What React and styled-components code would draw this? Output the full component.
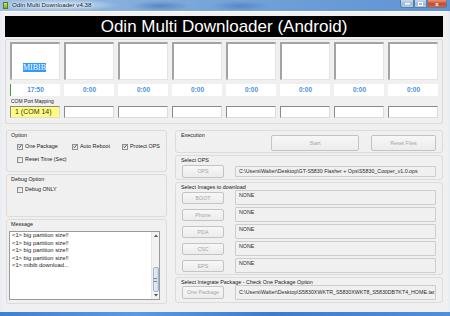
import React from "react";
import styled, { createGlobalStyle } from "styled-components";

const GlobalStyle = createGlobalStyle`
  html, body { margin: 0; padding: 0; background: #3b78c8; }
  body { font-family: "Liberation Sans", Arial, sans-serif; }
  * { box-sizing: border-box; }
`;

const Window = styled.div`
  width: 450px;
  height: 316px;
  display: flex;
  flex-direction: column;
  overflow: hidden;
  background: #dfe6ef;
`;

const TitleBar = styled.div`
  height: 11px;
  display: flex;
  align-items: flex-start;
  background:
    radial-gradient(ellipse 60px 6px at 60px 5px, rgba(225,236,248,0.9), rgba(225,236,248,0) 100%),
    radial-gradient(ellipse 30px 5px at 160px 6px, rgba(60,110,180,0.6), rgba(60,110,180,0) 100%),
    radial-gradient(ellipse 30px 5px at 240px 6px, rgba(60,110,180,0.5), rgba(60,110,180,0) 100%),
    linear-gradient(90deg, #9fc0e6 0%, #7faad9 35%, #6f9fd8 60%, #5f93d3 100%);
`;

const AppIcon = styled.div`
  width: 5px;
  height: 7px;
  margin: 2px 0 0 3px;
  background: linear-gradient(180deg, #d8e45a, #7fae2e);
  border: 1px solid #5a7a20;
`;

const TitleText = styled.span`
  font-size: 6.2px;
  line-height: 10px;
  margin-left: 4px;
  color: #101820;
  text-shadow: 0 0 3px #eef4fb, 0 0 2px #eef4fb;
`;

const Caption = styled.div`
  margin-left: auto;
  margin-right: 3px;
  display: flex;
  height: 8px;
`;

const CapBtn = styled.div`
  width: ${(p) => p.$w}px;
  height: 8px;
  border: 1px solid #5a7ea8;
  border-top: none;
  background: ${(p) =>
    p.$close
      ? "linear-gradient(180deg, #e8967a, #c9472a 55%, #d8663e)"
      : "linear-gradient(180deg, #c6d8ec, #9fbbdc 55%, #b5cbe4)"};
  display: flex;
  align-items: center;
  justify-content: center;
  color: #fff;
  font-size: 6px;
  font-weight: bold;
  border-radius: ${(p) => (p.$close ? "0 0 3px 0" : p.$first ? "0 0 0 3px" : "0")};
`;

const Frame = styled.div`
  flex: 1;
  display: flex;
  flex-direction: column;
  background: #e9eef4;
`;

const Client = styled.div`
  flex: 1;
  background: #f0f0f0;
  border-top: 1px solid #fbfbfb;
  margin: 0 2px;
  padding: 4px 5px 0 3px;
  display: flex;
  flex-direction: column;
`;

const Header = styled.div`
  height: 21px;
  background: #000;
  color: #fff;
  font-size: 17px;
  line-height: 21px;
  text-align: center;
  margin-bottom: 2px;
  white-space: nowrap;
`;

const TopPanel = styled.div`
  height: 85px;
  border: 1px solid #dadada;
  border-radius: 2px;
  padding: 2px 4px 0 4px;
  display: grid;
  grid-template-columns: repeat(8, 50px);
  column-gap: 4px;
  grid-template-rows: 38px 12px 10px 12px;
`;

const PortBox = styled.div`
  background: #fff;
  border-top: 2px solid #a3a3a3;
  border-left: 2px solid #a3a3a3;
  border-right: 1px solid #e3e3e3;
  border-bottom: 1px solid #e3e3e3;
  padding: 12px 0 0 11px;
`;

const Selected = styled.span`
  font-family: "Liberation Serif", "Times New Roman", serif;
  font-size: 8px;
  line-height: 9px;
  display: inline-block;
  background: #3399ff;
  color: #fff;
`;

const TimeRow = styled.div`
  grid-column: 1 / -1;
  grid-row: 2;
  display: grid;
  grid-template-columns: repeat(8, 50px);
  column-gap: 4px;
  padding-top: 4px;
`;

const Time = styled.div`
  height: 12px;
  background: #fff;
  border-left: 1px solid ${(p) => (p.$progress ? "#3ea03e" : "#fff")};
  color: #4a92e4;
  font-weight: bold;
  font-size: 6.5px;
  line-height: 12px;
  text-align: center;
`;

const ComLabel = styled.div`
  grid-column: 1 / -1;
  grid-row: 3;
  font-size: 5px;
  line-height: 6px;
  padding: 6px 0 0 1px;
  color: #222;
  white-space: nowrap;
`;

const ComRow = styled.div`
  grid-column: 1 / -1;
  grid-row: 4;
  display: grid;
  grid-template-columns: repeat(8, 50px);
  column-gap: 4px;
  padding-top: 4px;
`;

const ComBox = styled.div`
  height: 12px;
  background: ${(p) => (p.$active ? "#fcfc7e" : "#fff")};
  border-top: 1px solid #8a8a8a;
  border-left: 1px solid #8a8a8a;
  border-right: 1px solid #dcdcdc;
  border-bottom: 1px solid #dcdcdc;
  font-size: 7px;
  line-height: 10px;
  padding-left: 4px;
  color: #333;
  white-space: nowrap;
`;

const Bottom = styled.div`
  display: grid;
  grid-template-columns: 161px 268px;
  column-gap: 8px;
  margin: 6px 0 0 1px;
`;

const Column = styled.div`
  display: flex;
  flex-direction: column;
  gap: 2px;
`;

const Group = styled.div`
  height: ${(p) => p.$h}px;
  border: 1px solid #dcdcdc;
  border-radius: 3px;
  padding: 1px 6px 0 6px;
  display: flex;
  flex-direction: column;
`;

const GroupLabel = styled.div`
  font-size: 5.4px;
  line-height: 6px;
  color: #1a1a1a;
  margin-left: ${(p) => p.$ml ?? -2}px;
  flex: ${(p) => (p.$grow ? 1 : "none")};
  white-space: nowrap;
`;

const CheckGrid = styled.div`
  display: grid;
  grid-template-columns: 55px 50px auto;
  row-gap: 6px;
  margin-top: ${(p) => p.$mt || 4}px;
  padding-left: 4px;
`;

const CheckItem = styled.label`
  display: flex;
  align-items: center;
  gap: 2px;
  font-size: 5.4px;
  line-height: 7px;
  color: #222;
  white-space: nowrap;
`;

const Box = styled.span`
  width: 6px;
  height: 6px;
  border: 1px solid #8e8f8f;
  background: linear-gradient(135deg, #dcdcdc, #fbfbfb);
  display: inline-flex;
  align-items: center;
  justify-content: center;
`;

const Check = ({ checked, label }) => (
  <CheckItem>
    <Box>
      {checked && (
        <svg width="5" height="5" viewBox="0 0 10 10">
          <path d="M1.5 5.2 L4 8 L8.8 1.5" fill="none" stroke="#24417e" strokeWidth="2" />
        </svg>
      )}
    </Box>
    {label}
  </CheckItem>
);

const MessageArea = styled.div`
  margin: 4px 0 0 -4px;
  width: 151px;
  height: 69px;
  background: #fff;
  border: 1px solid #9a9a9a;
  display: flex;
`;

const MessageText = styled.div`
  flex: 1;
  font-size: 5.8px;
  line-height: 7.6px;
  color: #1a1a1a;
  padding: 0 0 0 2px;
  white-space: pre;
`;

const ScrollBar = styled.div`
  width: 8px;
  background: #f2f2f2;
  border-left: 1px solid #e6e6e6;
  display: flex;
  flex-direction: column;
  align-items: center;
`;

const Arrow = styled.div`
  height: 7px;
  width: 100%;
  display: flex;
  align-items: center;
  justify-content: center;
`;

const Thumb = styled.div`
  margin-top: auto;
  width: 6px;
  height: 25px;
  border: 1px solid #9eb2cb;
  border-radius: 2px;
  background: linear-gradient(90deg, #e9f0f8, #cddbea);
  display: flex;
  align-items: center;
  justify-content: center;
`;

const Grip = styled.div`
  width: 3px;
  height: 4px;
  border-top: 1px solid #6f84a0;
  border-bottom: 1px solid #6f84a0;
  background: linear-gradient(180deg, transparent 40%, #6f84a0 40%, #6f84a0 60%, transparent 60%);
`;

const ExecRow = styled.div`
  display: flex;
  align-items: flex-start;
  height: 100%;
`;

const Btn = styled.div`
  width: ${(p) => p.$w}px;
  height: ${(p) => p.$h || 12}px;
  margin-top: ${(p) => p.$mt || 0}px;
  margin-left: ${(p) => p.$ml || 0}px;
  flex-shrink: 0;
  border: 1px solid #c4c4c4;
  border-radius: 2px;
  background: linear-gradient(180deg, #f7f7f7, #ececec);
  color: #a6a6a6;
  font-size: 5.3px;
  line-height: ${(p) => (p.$h || 12) - 2}px;
  text-align: center;
  white-space: nowrap;
`;

const FileRow = styled.div`
  display: flex;
  align-items: center;
  height: 15px;
  margin-top: ${(p) => p.$mt || 0}px;
`;

const PathBox = styled.div`
  margin-left: 11px;
  width: 202px;
  height: ${(p) => p.$h || 15}px;
  border: 1px solid #cdcdcd;
  border-radius: 1px;
  background: #f0f0f0;
  color: #2a2a2a;
  font-size: 5.3px;
  line-height: ${(p) => p.$lh || 9}px;
  padding-left: 3px;
  white-space: nowrap;
  overflow: hidden;
`;

const Taskbar = styled.div`
  height: 4px;
  margin-top: auto;
  background: linear-gradient(90deg, #3f7fd0, #5a9ae0 30%, #3d7ccc 60%, #4f8fda);
`;

export default function App() {
  const times = ["17:50", "0:00", "0:00", "0:00", "0:00", "0:00", "0:00", "0:00"];
  const images = ["BOOT", "Phone", "PDA", "CSC", "EPS"];
  const log =
    "<1> big partition size!!\n<1> big partition size!!\n<1> big partition size!!\n<1> big partition size!!\n<1> mibib download...";
  return (
    <>
      <GlobalStyle />
      <Window>
        <TitleBar>
          <AppIcon />
          <TitleText>Odin Multi Downloader v4.38</TitleText>
          <Caption>
            <CapBtn $w={14} $first>
              <svg width="5" height="2" viewBox="0 0 5 2"><rect width="5" height="1.5" fill="#fff" /></svg>
            </CapBtn>
            <CapBtn $w={13}>
              <svg width="5" height="4" viewBox="0 0 5 4"><rect x="0.5" y="0.5" width="4" height="3" fill="none" stroke="#fff" /></svg>
            </CapBtn>
            <CapBtn $w={20} $close>x</CapBtn>
          </Caption>
        </TitleBar>
        <Frame>
          <Client>
            <Header>Odin Multi Downloader (Android)</Header>
            <TopPanel>
              {times.map((_, i) => (
                <PortBox key={i}>{i === 0 && <Selected>MIBIB</Selected>}</PortBox>
              ))}
              <TimeRow>
                {times.map((t, i) => (
                  <Time key={i} $progress={i === 0}>{t}</Time>
                ))}
              </TimeRow>
              <ComLabel>COM Port Mapping</ComLabel>
              <ComRow>
                {times.map((_, i) => (
                  <ComBox key={i} $active={i === 0}>{i === 0 ? "1 (COM 14)" : ""}</ComBox>
                ))}
              </ComRow>
            </TopPanel>
            <Bottom>
              <Column>
                <Group $h={42}>
                  <GroupLabel>Option</GroupLabel>
                  <CheckGrid $mt={5}>
                    <Check checked label="One Package" />
                    <Check checked label="Auto Reboot" />
                    <Check checked label="Protect OPS" />
                    <Check label="Reset Time (Sec)" />
                  </CheckGrid>
                </Group>
                <Group $h={43}>
                  <GroupLabel>Debug Option</GroupLabel>
                  <CheckGrid $mt={4}>
                    <Check label="Debug ONLY" />
                  </CheckGrid>
                </Group>
                <Group $h={85}>
                  <GroupLabel>Message</GroupLabel>
                  <MessageArea>
                    <MessageText>{log}</MessageText>
                    <ScrollBar>
                      <Arrow>
                        <svg width="4" height="3" viewBox="0 0 4 3"><path d="M0 3 L2 0.5 L4 3Z" fill="#505050" /></svg>
                      </Arrow>
                      <Thumb><Grip /></Thumb>
                      <Arrow>
                        <svg width="4" height="3" viewBox="0 0 4 3"><path d="M0 0 L2 2.5 L4 0Z" fill="#505050" /></svg>
                      </Arrow>
                    </ScrollBar>
                  </MessageArea>
                </Group>
              </Column>
              <Column>
                <Group $h={23}>
                  <ExecRow>
                    <GroupLabel $grow $ml={-1}>Execution</GroupLabel>
                    <Btn $w={88} $h={16} $mt={3}>Start</Btn>
                    <Btn $w={65} $h={16} $mt={3} $ml={12}>Reset Files</Btn>
                  </ExecRow>
                </Group>
                <Group $h={25}>
                  <GroupLabel $ml={-1}>Select OPS</GroupLabel>
                  <FileRow $mt={1}>
                    <Btn $w={42} $h={13}>OPS</Btn>
                    <PathBox $h={11} $lh={9}>
                      C:\Users\Walter\Desktop\GT-S5830 Flasher + Ops\S5830_Cooper_v1.0.ops
                    </PathBox>
                  </FileRow>
                </Group>
                <Group $h={93}>
                  <GroupLabel $ml={-1}>Select Images to download</GroupLabel>
                  {images.map((n, i) => (
                    <FileRow key={n} $mt={i === 0 ? 0 : 2}>
                      <Btn $w={42} $h={12}>{n}</Btn>
                      <PathBox>NONE</PathBox>
                    </FileRow>
                  ))}
                </Group>
                <Group $h={26}>
                  <GroupLabel $ml={-1}>Select Integrate Package - Check One Package Option</GroupLabel>
                  <FileRow>
                    <Btn $w={42} $h={13}>One Package</Btn>
                    <PathBox $lh={13}>
                      C:\Users\Walter\Desktop\S5830XWKTR_S5830XWKT8_S5830DBTKT4_HOME.tar..
                    </PathBox>
                  </FileRow>
                </Group>
              </Column>
            </Bottom>
          </Client>
          <Taskbar />
        </Frame>
      </Window>
    </>
  );
}
